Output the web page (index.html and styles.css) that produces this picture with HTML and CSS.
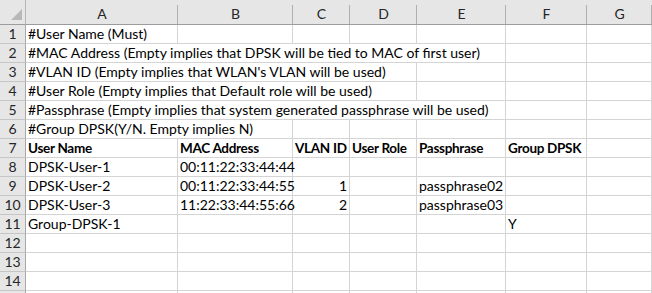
FILE: index.html
```html
<!DOCTYPE html>
<html>
<head>
<meta charset="utf-8">
<link rel="stylesheet" href="styles.css">
</head>
<body>
<div class="sheet">
  <div class="corner"><svg width="25" height="24" viewBox="0 0 25 24"><polygon points="11,20 22,20 22,9" fill="#b8b8b8"/></svg></div>
  <div class="colhead">A</div><div class="colhead">B</div><div class="colhead">C</div><div class="colhead">D</div><div class="colhead">E</div><div class="colhead">F</div><div class="colhead">G</div>

  <div class="rowhead">1</div><div class="cell">#User Name (Must)</div><div class="cell"></div><div class="cell"></div><div class="cell"></div><div class="cell"></div><div class="cell"></div><div class="cell"></div>

  <div class="rowhead">2</div><div class="cell span5">#MAC Address (Empty implies that DPSK will be tied to MAC of first user)</div><div class="cell"></div><div class="cell"></div>

  <div class="rowhead">3</div><div class="cell span4">#VLAN ID (Empty implies that WLAN's VLAN will be used)</div><div class="cell"></div><div class="cell"></div><div class="cell"></div>

  <div class="rowhead">4</div><div class="cell span4">#User Role (Empty implies that Default role will be used)</div><div class="cell"></div><div class="cell"></div><div class="cell"></div>

  <div class="rowhead">5</div><div class="cell span5">#Passphrase (Empty implies that system generated passphrase will be used)</div><div class="cell"></div><div class="cell"></div>

  <div class="rowhead">6</div><div class="cell span2">#Group DPSK(Y/N. Empty implies N)</div><div class="cell"></div><div class="cell"></div><div class="cell"></div><div class="cell"></div><div class="cell"></div>

  <div class="rowhead">7</div><div class="cell bold">User Name</div><div class="cell bold">MAC Address</div><div class="cell bold">VLAN ID</div><div class="cell bold">User Role</div><div class="cell bold">Passphrase</div><div class="cell bold">Group DPSK</div><div class="cell"></div>

  <div class="rowhead">8</div><div class="cell">DPSK-User-1</div><div class="cell">00:11:22:33:44:44</div><div class="cell"></div><div class="cell"></div><div class="cell"></div><div class="cell"></div><div class="cell"></div>

  <div class="rowhead">9</div><div class="cell">DPSK-User-2</div><div class="cell">00:11:22:33:44:55</div><div class="cell num">1</div><div class="cell"></div><div class="cell">passphrase02</div><div class="cell"></div><div class="cell"></div>

  <div class="rowhead">10</div><div class="cell">DPSK-User-3</div><div class="cell">11:22:33:44:55:66</div><div class="cell num">2</div><div class="cell"></div><div class="cell">passphrase03</div><div class="cell"></div><div class="cell"></div>

  <div class="rowhead">11</div><div class="cell">Group-DPSK-1</div><div class="cell"></div><div class="cell"></div><div class="cell"></div><div class="cell"></div><div class="cell">Y</div><div class="cell"></div>

  <div class="rowhead">12</div><div class="cell"></div><div class="cell"></div><div class="cell"></div><div class="cell"></div><div class="cell"></div><div class="cell"></div><div class="cell"></div>

  <div class="rowhead">13</div><div class="cell"></div><div class="cell"></div><div class="cell"></div><div class="cell"></div><div class="cell"></div><div class="cell"></div><div class="cell"></div>

  <div class="rowhead">14</div><div class="cell"></div><div class="cell"></div><div class="cell"></div><div class="cell"></div><div class="cell"></div><div class="cell"></div><div class="cell"></div>

  <div class="rowhead"></div><div class="cell"></div><div class="cell"></div><div class="cell"></div><div class="cell"></div><div class="cell"></div><div class="cell"></div><div class="cell"></div>
</div>
</body>
</html>
```

FILE: styles.css
```css
html, body {
  margin: 0;
  padding: 0;
  background: #ffffff;
  overflow: hidden;
}

.sheet {
  display: grid;
  grid-template-columns: 26px 152px 115px 57px 67px 89px 81px 65px;
  grid-template-rows: 25px;
  grid-auto-rows: 19px;
  width: 652px;
  height: 293px;
  overflow: hidden;
  font-family: Lato, "Liberation Sans", sans-serif;
  font-size: 14px;
  color: #000000;
}

.corner {
  background: #e6e6e6;
  border-right: 1px solid #b5b5b5;
  border-bottom: 1px solid #9c9c9c;
  box-sizing: border-box;
}

.corner svg {
  display: block;
}

.colhead {
  box-sizing: border-box;
  background: linear-gradient(#b0b0b0, #b0b0b0) right bottom / 1px 19px no-repeat, #e6e6e6;
  border-bottom: 1px solid #9c9c9c;
  text-align: center;
  line-height: 20px;
  padding-top: 4px;
  color: #262626;
}

.rowhead {
  box-sizing: border-box;
  background: #e6e6e6;
  border-right: 1px solid #a8a8a8;
  border-bottom: 1px solid #c6c6c6;
  text-align: center;
  line-height: 18px;
  color: #262626;
}

.cell {
  box-sizing: border-box;
  border-right: 1px solid #d4d4d4;
  border-bottom: 1px solid #d4d4d4;
  padding: 0 2px 0 2px;
  line-height: 18px;
  white-space: nowrap;
}

.span2 { grid-column: span 2; }
.span4 { grid-column: span 4; }
.span5 { grid-column: span 5; }

.bold {
  font-weight: 700;
  font-size: 13.5px;
  letter-spacing: -0.3px;
}

.num { text-align: right; }
```
